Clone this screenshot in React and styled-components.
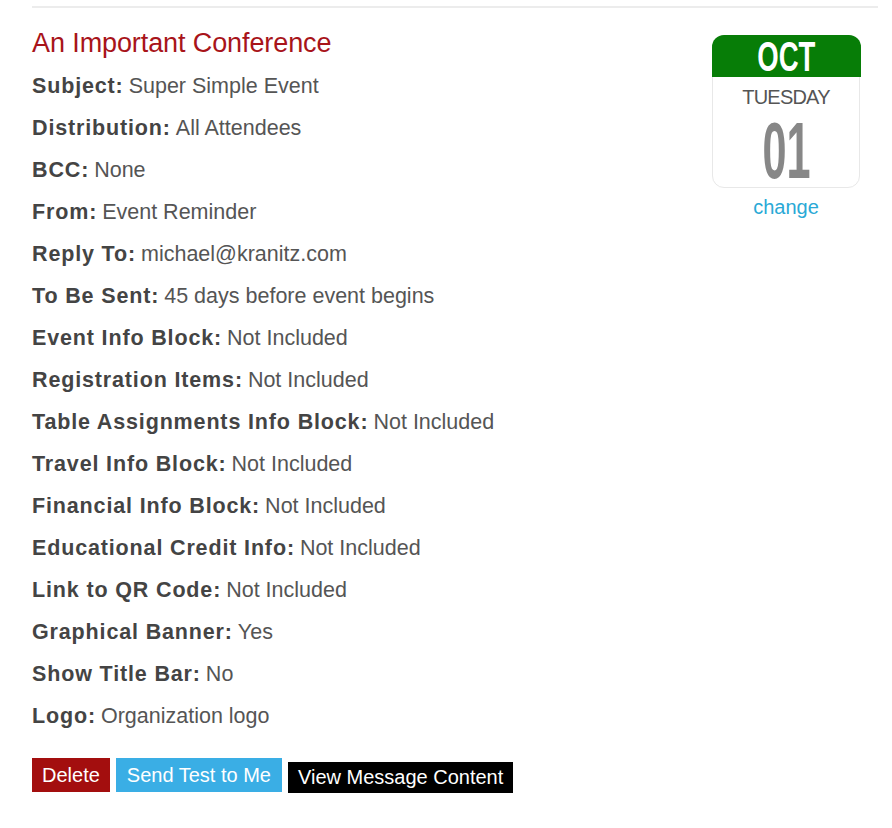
import React from "react";
import styled, { createGlobalStyle } from "styled-components";

const GlobalStyle = createGlobalStyle`
  html, body {
    margin: 0;
    padding: 0;
    background: #fff;
  }
  body {
    font-family: "Liberation Sans", Arial, sans-serif;
  }
`;

const Page = styled.div`
  padding: 6px 14px 0 32px;
`;

const Rule = styled.div`
  height: 2px;
  background: #ececec;
`;

const Header = styled.div`
  display: flex;
  justify-content: space-between;
  align-items: flex-start;
  margin-top: 17px;
`;

const Details = styled.div`
  display: flex;
  flex-direction: column;
`;

const Title = styled.h2`
  margin: 0 0 4px;
  font-size: 27px;
  line-height: 36px;
  font-weight: normal;
  color: #a8141a;
  letter-spacing: -0.1px;
`;

const Row = styled.div`
  font-size: 21.5px;
  line-height: 42px;
  color: #555;
  white-space: nowrap;
`;

const Label = styled.b`
  color: #444;
  font-weight: bold;
  letter-spacing: 0.85px;
  margin-right: 5px;
`;

/* Calendar */
const CalendarCol = styled.div`
  width: 148px;
  margin: 10px 18px 0 0;
  display: flex;
  flex-direction: column;
  align-items: center;
`;

const Calendar = styled.div`
  width: 148px;
  height: 153px;
  box-sizing: border-box;
  border: 1.5px solid #e8e8e8;
  border-radius: 12px;
  text-align: center;
  background: #fff;
`;

const Month = styled.div`
  background: #077d07;
  height: 42px;
  margin: -1.5px -1.5px 0;
  border-radius: 12px 12px 0 0;
  color: #fff;
  font-size: 43px;
  font-weight: bold;
  line-height: 42px;
`;

const Squeeze = styled.span`
  display: inline-block;
  transform: scaleX(${(p) => p.$x});
`;

const Weekday = styled.div`
  margin-top: 8px;
  font-size: 20px;
  line-height: 24px;
  letter-spacing: -0.8px;
  color: #555;
`;

const Day = styled.div`
  margin-top: 2px;
  padding-top: 8px;
  height: 72px;
  box-sizing: border-box;
  font-size: 80px;
  line-height: 64px;
  font-weight: bold;
  color: #878787;
`;

const ChangeLink = styled.a`
  margin-top: 7px;
  font-size: 20px;
  line-height: 24px;
  color: #2aa9d6;
  text-decoration: none;
`;

/* Buttons */
const Actions = styled.div`
  display: flex;
  align-items: flex-start;
  gap: 6px;
  margin-top: 21px;
`;

const Button = styled.button`
  border: none;
  margin: ${(p) => (p.$low ? "4px 0 0" : "0")};
  padding: 0 ${(p) => p.$pad || 10}px;
  height: ${(p) => (p.$low ? "31px" : "34px")};
  line-height: ${(p) => (p.$low ? "31px" : "34px")};
  font-family: "Liberation Sans", Arial, sans-serif;
  font-size: 20px;
  color: #fff;
  background: ${(p) => p.$bg};
  cursor: pointer;
`;

const rows = [
  ["Subject", "Super Simple Event"],
  ["Distribution", "All Attendees"],
  ["BCC", "None"],
  ["From", "Event Reminder"],
  ["Reply To", "michael@kranitz.com"],
  ["To Be Sent", "45 days before event begins"],
  ["Event Info Block", "Not Included"],
  ["Registration Items", "Not Included"],
  ["Table Assignments Info Block", "Not Included"],
  ["Travel Info Block", "Not Included"],
  ["Financial Info Block", "Not Included"],
  ["Educational Credit Info", "Not Included"],
  ["Link to QR Code", "Not Included"],
  ["Graphical Banner", "Yes"],
  ["Show Title Bar", "No"],
  ["Logo", "Organization logo"],
];

export default function App() {
  return (
    <>
      <GlobalStyle />
      <Page>
        <Rule />
        <Header>
          <Details>
            <Title>An Important Conference</Title>
            {rows.map(([label, value]) => (
              <Row key={label}>
                <Label>{label}:</Label>
                {value}
              </Row>
            ))}
          </Details>
          <CalendarCol>
            <Calendar>
              <Month>
                <Squeeze $x={0.64}>OCT</Squeeze>
              </Month>
              <Weekday>TUESDAY</Weekday>
              <Day>
                <Squeeze $x={0.54}>01</Squeeze>
              </Day>
            </Calendar>
            <ChangeLink href="#">change</ChangeLink>
          </CalendarCol>
        </Header>
        <Actions>
          <Button $bg="#a30e0e">Delete</Button>
          <Button $bg="#3aaee5" $pad={11}>
            Send Test to Me
          </Button>
          <Button $bg="#000" $low>
            View Message Content
          </Button>
        </Actions>
      </Page>
    </>
  );
}
